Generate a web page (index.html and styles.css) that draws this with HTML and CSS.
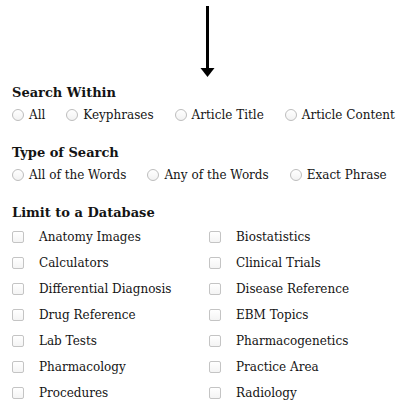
FILE: index.html
```html
<!DOCTYPE html>
<html lang="en">
<head>
    <meta charset="UTF-8">
    <title>Search Options</title>
    <link rel="stylesheet" href="styles.css">
</head>
<body>

    <div class="arrow">
        <svg width="16" height="78" viewBox="0 0 16 78">
            <rect x="6" y="6" width="3" height="63" fill="#000"/>
            <polygon points="0.5,68 14.5,68 7.5,77" fill="#000"/>
        </svg>
    </div>

    <div class="group">
        <h3>Search Within</h3>
        <div class="options">
            <label class="opt"><span class="radio"></span>All</label>
            <label class="opt"><span class="radio"></span>Keyphrases</label>
            <label class="opt"><span class="radio"></span>Article Title</label>
            <label class="opt"><span class="radio"></span>Article Content</label>
        </div>
    </div>

    <div class="group">
        <h3>Type of Search</h3>
        <div class="options">
            <label class="opt"><span class="radio"></span>All of the Words</label>
            <label class="opt"><span class="radio"></span>Any of the Words</label>
            <label class="opt"><span class="radio"></span>Exact Phrase</label>
        </div>
    </div>

    <div class="group">
        <h3>Limit to a Database</h3>
        <div class="databases">
            <label class="db"><span class="check"></span>Anatomy Images</label>
            <label class="db"><span class="check"></span>Biostatistics</label>
            <label class="db"><span class="check"></span>Calculators</label>
            <label class="db"><span class="check"></span>Clinical Trials</label>
            <label class="db"><span class="check"></span>Differential Diagnosis</label>
            <label class="db"><span class="check"></span>Disease Reference</label>
            <label class="db"><span class="check"></span>Drug Reference</label>
            <label class="db"><span class="check"></span>EBM Topics</label>
            <label class="db"><span class="check"></span>Lab Tests</label>
            <label class="db"><span class="check"></span>Pharmacogenetics</label>
            <label class="db"><span class="check"></span>Pharmacology</label>
            <label class="db"><span class="check"></span>Practice Area</label>
            <label class="db"><span class="check"></span>Procedures</label>
            <label class="db"><span class="check"></span>Radiology</label>
        </div>
    </div>

</body>
</html>
```

FILE: styles.css
```css
body { margin: 0; background: #fff; color: #141414; font-family: "DejaVu Serif", Georgia, serif; font-size: 12px; }
.arrow { display: flex; padding-left: 200px; height: 82px; }
.arrow svg { display: block; }
.group { padding-left: 12px; }
h3 { margin: 0; font-size: 13px; font-weight: bold; line-height: 22px; height: 22px; }
.options { display: flex; line-height: 22px; margin-bottom: 16px; white-space: nowrap; }
.opt { display: flex; align-items: center; margin-right: 21px; }
.radio { width: 12px; height: 12px; border: 1px solid #bdbdbd; border-radius: 50%; box-sizing: border-box; margin-right: 5px; background: linear-gradient(#fff, #f2f2f2); }
.databases { display: grid; grid-template-columns: 197px 197px; }
.db { display: flex; align-items: center; height: 26px; white-space: nowrap; }
.check { width: 12px; height: 12px; border: 1px solid #c4c4c4; border-radius: 2px; box-sizing: border-box; margin-right: 15px; background: linear-gradient(#fff, #f4f4f4); }
```
